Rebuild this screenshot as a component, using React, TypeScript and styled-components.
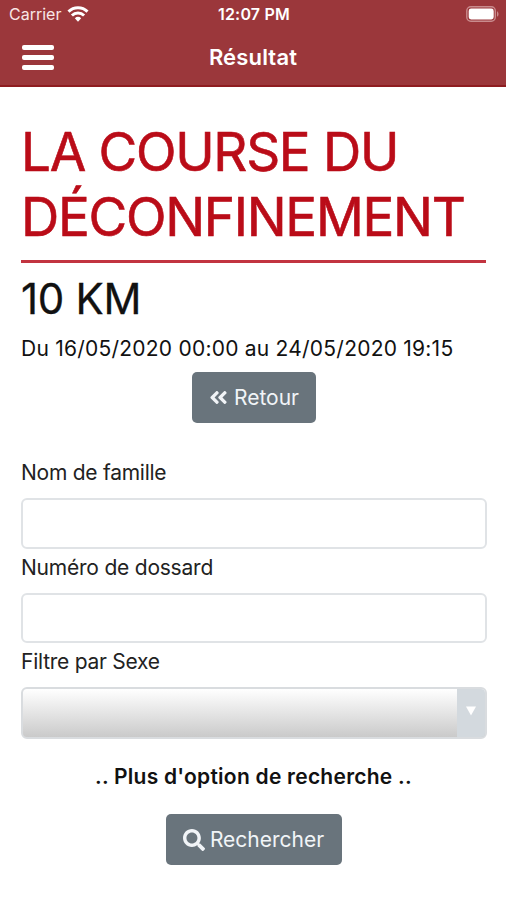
import React from "react";
import styled, { createGlobalStyle } from "styled-components";
import { FaSearch, FaAngleDoubleLeft } from "react-icons/fa";

const GlobalStyle = createGlobalStyle`
  * { box-sizing: border-box; }
  body { margin: 0; background: #fff; color: #111; font-family: Inter, "Liberation Sans", sans-serif; }
`;

const Page = styled.div`
  width: 506px;
  height: 900px;
  overflow: hidden;
  background: #fff;
`;

const Header = styled.header`
  height: 87px;
  background: #9b373b;
  border-bottom: 2px solid #8e1c20;
  color: #fff;
`;

const StatusBar = styled.div`
  display: grid;
  grid-template-columns: 1fr auto 1fr;
  align-items: center;
  height: 28px;
  padding: 0 7px 0 9px;
`;

const Carrier = styled.div`
  display: flex;
  align-items: center;
  gap: 6px;
  font-size: 16px;
  color: #f8e6e6;
`;

const Clock = styled.div`
  font-size: 16px;
  font-weight: 600;
  letter-spacing: 0.2px;
`;

const BatterySlot = styled.div`
  display: flex;
  justify-content: flex-end;
`;

const NavBar = styled.div`
  display: grid;
  grid-template-columns: 1fr auto 1fr;
  align-items: center;
  height: 58px;
  padding: 0 22px;
`;

const MenuButton = styled.button`
  display: flex;
  flex-direction: column;
  gap: 5px;
  width: 32px;
  padding: 0;
  border: 0;
  background: none;
`;

const MenuLine = styled.span`
  height: 5px;
  border-radius: 2px;
  background: #fff;
`;

const NavTitle = styled.div`
  font-size: 22px;
  font-weight: 600;
  letter-spacing: 0.15px;
`;

const Content = styled.main`
  display: flex;
  flex-direction: column;
  padding: 33px 20px 0 21px;
`;

const EventTitle = styled.h1`
  margin: 0;
  padding-bottom: 10px;
  border-bottom: 3px solid #c23440;
  color: #ba0c18;
  font-size: 53px;
  font-weight: 400;
  line-height: 65px;
  letter-spacing: -1.3px;
  white-space: nowrap;
  -webkit-text-stroke: 0.6px #ba0c18;
`;

const RaceName = styled.h2`
  margin: 10px 0 0;
  font-size: 42px;
  font-weight: 400;
  line-height: 52px;
  letter-spacing: -0.3px;
  -webkit-text-stroke: 0.3px #111;
`;

const Dates = styled.p`
  margin: 8px 0 7px;
  font-size: 21px;
  line-height: 32px;
  letter-spacing: 0.23px;
  white-space: nowrap;
`;

const Button = styled.button<{ $width: number }>`
  display: flex;
  align-items: center;
  justify-content: center;
  align-self: center;
  gap: 5px;
  width: ${(p) => p.$width}px;
  height: 51px;
  padding: 0;
  border: 0;
  border-radius: 5px;
  background: #69747c;
  color: #f1f4f7;
  font: 400 21px/32px Inter, "Liberation Sans", sans-serif;
`;

const Form = styled.form`
  display: flex;
  flex-direction: column;
  margin-top: 31px;
`;

const Label = styled.label<{ $spacing: number }>`
  height: 44px;
  padding-top: 3px;
  color: #222;
  font-size: 21px;
  line-height: 32px;
  letter-spacing: ${(p) => p.$spacing}px;
`;

const Field = styled.input`
  width: 466px;
  height: 50.5px;
  padding: 0 12px;
  border: 2px solid #e0e3e6;
  border-radius: 6px;
  background: #fff;
`;

const Select = styled.div`
  display: flex;
  justify-content: flex-end;
  width: 466px;
  height: 52px;
  overflow: hidden;
  border: 2px solid #d9dcdf;
  border-radius: 6px;
  background: linear-gradient(#fff, #cacaca);
`;

const SelectArrow = styled.span`
  display: flex;
  justify-content: center;
  width: 28px;
  padding-top: 17px;
  background: #d3d9de;
`;

const MoreOptions = styled.div`
  margin: 22px 0 21px;
  text-align: center;
  font-size: 21px;
  font-weight: 600;
  line-height: 32px;
  letter-spacing: 0.25px;
`;

const WifiIcon = () => (
  <svg width="22" height="16" viewBox="0 0 22 16" fill="none" stroke="#fff" strokeWidth="3">
    <path d="M1.500 5.600a13.700 13.700 0 0 1 19 0M4.900 9.500a8.800 8.800 0 0 1 12.200 0" />
    <path d="M7.800 12.200a4.700 4.700 0 0 1 6.400 0L11 15.700z" fill="#fff" stroke="none" />
  </svg>
);

const BatteryIcon = () => (
  <svg width="33" height="16" viewBox="0 0 33 16">
    <rect x=".8" y=".8" width="28.5" height="14.4" rx="4" fill="none" stroke="#c98b8d" strokeWidth="1.4" />
    <rect x="2.7" y="2.5" width="25" height="11" rx="2.4" fill="#fff" />
    <path d="M31 5.200c2 1 2 4.600 0 5.600z" fill="#c98b8d" />
  </svg>
);

export default function App() {
  return (
    <Page>
      <GlobalStyle />
      <Header>
        <StatusBar>
          <Carrier>Carrier <WifiIcon /></Carrier>
          <Clock>12:07 PM</Clock>
          <BatterySlot><BatteryIcon /></BatterySlot>
        </StatusBar>
        <NavBar>
          <MenuButton aria-label="Menu" type="button">
            <MenuLine /><MenuLine /><MenuLine />
          </MenuButton>
          <NavTitle>Résultat</NavTitle>
        </NavBar>
      </Header>
      <Content>
        <EventTitle>LA COURSE DU<br />DÉCONFINEMENT</EventTitle>
        <RaceName>10 KM</RaceName>
        <Dates>Du 16/05/2020 00:00 au 24/05/2020 19:15</Dates>
        <Button type="button" $width={124}><FaAngleDoubleLeft size={21} />Retour</Button>
        <Form>
          <Label htmlFor="nom" $spacing={-0.25}>Nom de famille</Label>
          <Field id="nom" />
          <Label htmlFor="dossard" $spacing={-0.22}>Numéro de dossard</Label>
          <Field id="dossard" />
          <Label $spacing={-0.25}>Filtre par Sexe</Label>
          <Select>
            <SelectArrow>
              <svg width="10" height="10" viewBox="0 0 10 10"><path d="M0 .5h10L5 9.500z" fill="#fff" /></svg>
            </SelectArrow>
          </Select>
          <MoreOptions>.. Plus d'option de recherche ..</MoreOptions>
          <Button type="button" $width={176}><FaSearch size={22} />Rechercher</Button>
        </Form>
      </Content>
    </Page>
  );
}
